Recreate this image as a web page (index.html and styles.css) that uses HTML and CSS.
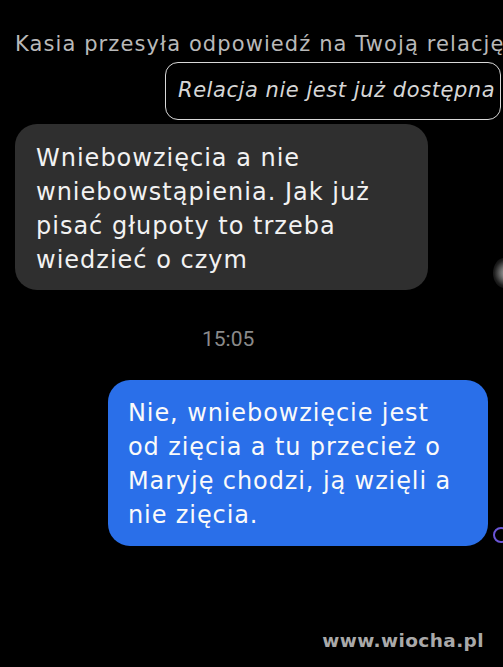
FILE: index.html
```html
<!DOCTYPE html>
<html lang="pl">
<head>
<meta charset="utf-8">
<link rel="stylesheet" href="styles.css">
</head>
<body>
<div class="screen">
  <div class="reply-note">Kasia przesyła odpowiedź na Twoją relację</div>
  <div class="story-box">Relacja nie jest już dostępna</div>
  <div class="row row-in">
    <div class="bubble bubble-in">Wniebowzięcia a nie<br>wniebowstąpienia. Jak już<br>pisać głupoty to trzeba<br>wiedzieć o czym</div>
    <div class="avatar"></div>
  </div>
  <div class="time">15:05</div>
  <div class="row row-out">
    <div class="bubble bubble-out">Nie, wniebowzięcie jest<br>od zięcia a tu przecież o<br>Maryję chodzi, ją wzięli a<br>nie zięcia.</div>
    <div class="receipt"></div>
  </div>
  <div class="watermark">www.wiocha.pl</div>
</div>
</body>
</html>
```
FILE: styles.css
```css
html, body {
  margin: 0;
  padding: 0;
  background: #000;
}
.screen {
  position: relative;
  width: 503px;
  height: 667px;
  overflow: hidden;
  background: #000;
  font-family: "DejaVu Sans", Roboto, sans-serif;
  padding-top: 32px;
  box-sizing: border-box;
}
.reply-note {
  padding-left: 15px;
  font-size: 21px;
  line-height: 24px;
  letter-spacing: 1.1px;
  color: #b9b9b9;
  white-space: nowrap;
}
.story-box {
  margin: 6px 0 0 165px;
  width: 336px;
  height: 58px;
  box-sizing: border-box;
  border: 1.5px solid #d8d8d8;
  border-radius: 13px;
  display: flex;
  align-items: center;
  padding: 0 0 2px 12px;
  font-style: italic;
  font-size: 21px;
  letter-spacing: 0.55px;
  color: #d6d6d6;
  white-space: nowrap;
}
.row {
  display: flex;
  align-items: flex-end;
}
.row-in {
  margin-top: 4px;
  padding-left: 15px;
}
.bubble {
  box-sizing: border-box;
  height: 166px;
  border-radius: 22px;
  font-size: 24px;
  line-height: 34px;
  white-space: nowrap;
}
.bubble-in {
  width: 413px;
  background: #2f2f2f;
  color: #f2f2f2;
  padding: 17px 0 0 21px;
  letter-spacing: 1px;
}
.avatar {
  width: 22px;
  height: 30px;
  margin: 0 -12px 2px auto;
  border-radius: 50%;
  background: radial-gradient(ellipse at 70% 50%, #bdbdbd 0%, #6e6e6e 35%, #1e1e1e 65%, #000 90%);
}
.time {
  margin: 37px 0 0 202px;
  font-family: Roboto, sans-serif;
  font-size: 21px;
  line-height: 24px;
  color: #8a8a8a;
}
.row-out {
  margin-top: 29px;
  padding-left: 108px;
}
.bubble-out {
  width: 380px;
  background: #2a6fe9;
  color: #fafafa;
  padding: 16px 0 0 20px;
  letter-spacing: 0.9px;
}
.receipt {
  width: 12px;
  height: 12px;
  margin: 0 -10px 3px 5px;
  border: 2px solid #6a55d6;
  border-radius: 50%;
  flex: none;
}
.watermark {
  position: absolute;
  right: 19px;
  bottom: 16px;
  font-family: "DejaVu Sans", sans-serif;
  font-weight: bold;
  font-size: 18.5px;
  color: #a9a9a9;
  letter-spacing: 0.4px;
}
```
